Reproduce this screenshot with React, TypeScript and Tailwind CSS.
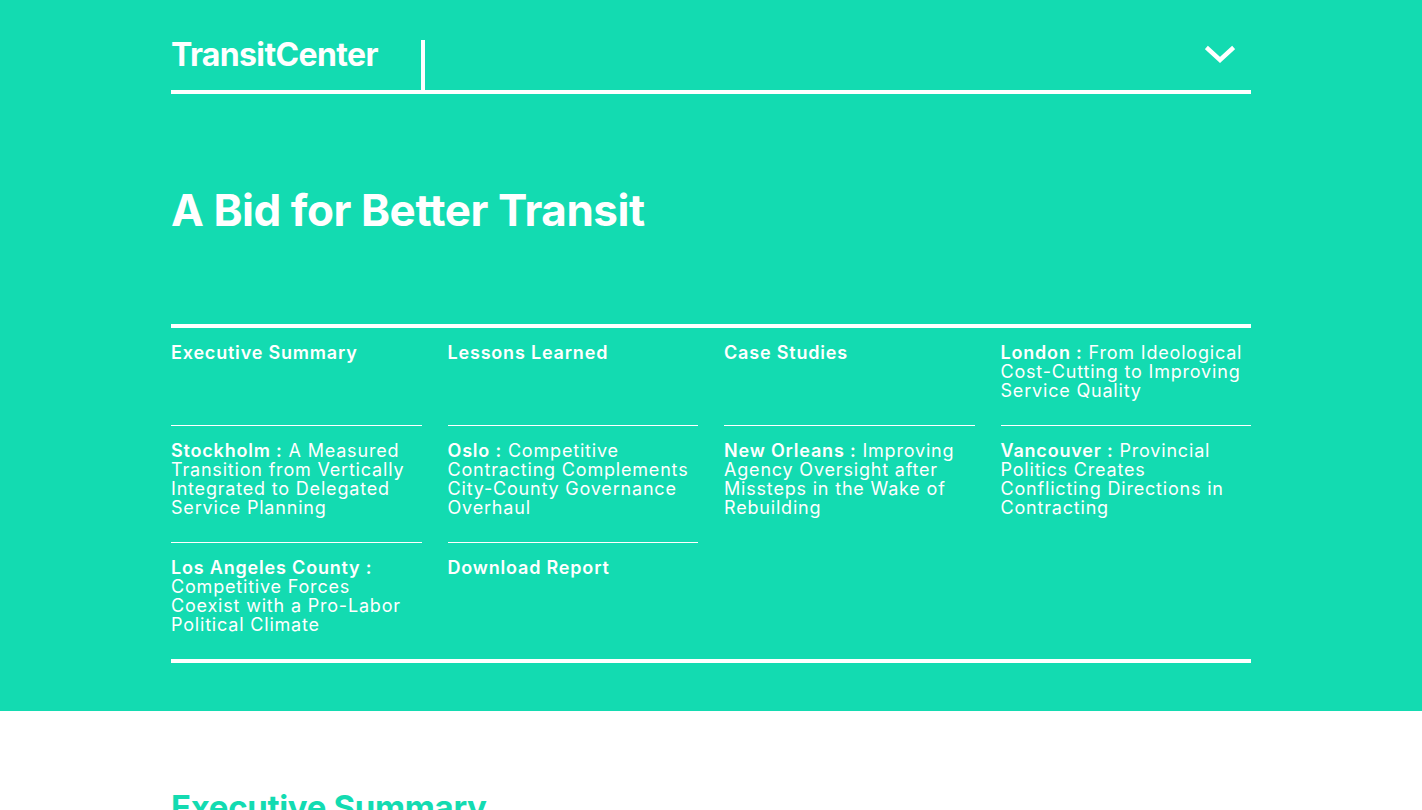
import React from 'react';

type NavItem = {
  label: string;
  desc?: string;
};

// Table of contents for the report, row by row (4 columns)
const navItems: NavItem[] = [
  { label: 'Executive Summary' },
  { label: 'Lessons Learned' },
  { label: 'Case Studies' },
  { label: 'London :', desc: 'From Ideological Cost-Cutting to Improving Service Quality' },
  { label: 'Stockholm :', desc: 'A Measured Transition from Vertically Integrated to Delegated Service Planning' },
  { label: 'Oslo :', desc: 'Competitive Contracting Complements City-County Governance Overhaul' },
  { label: 'New Orleans :', desc: 'Improving Agency Oversight after Missteps in the Wake of Rebuilding' },
  { label: 'Vancouver :', desc: 'Provincial Politics Creates Conflicting Directions in Contracting' },
  { label: 'Los Angeles County :', desc: 'Competitive Forces Coexist with a Pro-Labor Political Climate' },
  { label: 'Download Report' },
];

const Chevron = () => (
  <svg width="30" height="20" viewBox="0 0 30 20" fill="none">
    <path d="M3 4 L15 15 L27 4" stroke="white" strokeWidth="4.5" strokeLinecap="square" />
  </svg>
);

const App: React.FC = () => {
  return (
    <div className="min-h-screen bg-white font-['Inter','Liberation_Sans',sans-serif]">
      {/* Hero */}
      <div className="bg-[#13dbb1] text-white pb-[48px]">
        <div className="mx-auto w-[1080px]">
          {/* Header */}
          <div className="flex items-stretch border-b-4 border-white pt-[40px] h-[94px]">
            <div className="w-[250px] text-[32px] font-bold tracking-[-0.02em] leading-[30px]">
              TransitCenter
            </div>
            <div className="flex-1 flex items-start justify-end border-l-4 border-white pr-[16px] pt-[5px]">
              <Chevron />
            </div>
          </div>

          {/* Title */}
          <h1 className="mt-[88px] text-[44px] font-bold leading-[56px] tracking-[-0.01em]">
            A Bid for Better Transit
          </h1>

          {/* Contents grid */}
          <div className="mt-[86px] border-t-4 border-b-4 border-white grid grid-cols-4 gap-x-[26px]">
            {navItems.map((item, i) => (
              <div
                key={i}
                className={`pt-[15px] pb-[25px] text-[18px] leading-[19px] tracking-[0.045em] ${i >= 4 ? 'border-t border-white' : ''}`}
              >
                <div className="min-h-[57px]">
                  <span className="font-semibold">{item.label}</span>
                  {item.desc && <span className="font-normal"> {item.desc}</span>}
                </div>
              </div>
            ))}
          </div>
        </div>
      </div>

      {/* Body */}
      <div className="mx-auto w-[1080px] pt-[74px]">
        <h2 className="text-[33px] font-bold text-[#13dbb1] leading-[44px] tracking-[-0.01em]">
          Executive Summary
        </h2>
      </div>
    </div>
  );
};

export default App;
